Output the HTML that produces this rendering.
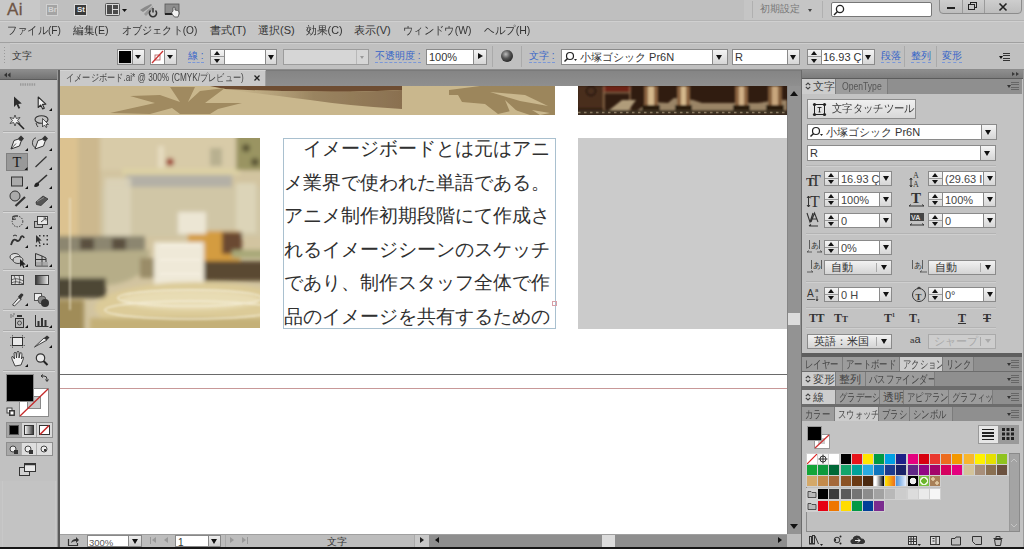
<!DOCTYPE html>
<html><head><meta charset="utf-8">
<style>
*{box-sizing:border-box;margin:0;padding:0}
html,body{width:1024px;height:549px;overflow:hidden;background:#000}
body{position:relative;font-family:"Liberation Sans",sans-serif;color:#222;font-feature-settings:"palt" 1}
.a{position:absolute}
.t{position:absolute;white-space:nowrap;line-height:1}
.inp{position:absolute;background:#fff;border:1px solid #7a7a7a}
.btn{position:absolute;background:linear-gradient(#f4f4f4,#d6d6d6);border:1px solid #8a8a8a}
.dd{position:absolute;background:linear-gradient(#f2f2f2,#d0d0d0);border:1px solid #7a7a7a}
.tri{position:absolute;width:0;height:0;border-left:4px solid transparent;border-right:4px solid transparent;border-top:5px solid #111}
.lnk{color:#3564c8;padding-bottom:1px;border-bottom:1px dashed #7b98d8}
</style></head><body>


<!-- app bar -->
<div class="a" style="left:0;top:0;width:1024px;height:21px;background:#bfbfbf;border-bottom:1px solid #b4b4b4"></div>
<div class="a" style="left:0;top:0;width:40px;height:20px;background:#c8c8c8"></div><div class="a" style="left:744px;top:0;width:280px;height:20px;background:#c5c5c5"></div>
<div class="t" style="left:7px;top:1px;font-size:17px;color:#6e5546;-webkit-text-stroke:0.3px #6e5546;letter-spacing:0.3px">Ai</div>
<div class="a" style="left:46px;top:4px;width:12px;height:12px;background:#a4a4a4;border:1px solid #d0d0d0"></div>
<div class="t" style="left:48px;top:6px;font-size:8px;color:#d4d4d4;font-weight:bold">Br</div>
<div class="a" style="left:74px;top:4px;width:13px;height:12px;background:#3a3a3a;border:1px solid #dadada"></div>
<div class="t" style="left:77px;top:6px;font-size:8px;color:#e8e8e8;font-weight:bold">St</div>
<svg class="a" style="left:104px;top:2px" width="26" height="15" viewBox="0 0 26 15">
<rect x="1.5" y="1.5" width="14" height="12" rx="1" fill="#d8d8d8" stroke="#555" stroke-width="1"/>
<rect x="3" y="3" width="5" height="9" fill="#4a4a4a"/>
<rect x="9" y="3" width="5" height="4" fill="#4a4a4a"/>
<rect x="9" y="8" width="5" height="4" fill="#4a4a4a"/>
<path d="M18 7 H23 L20.5 10Z" fill="#111"/>
</svg>
<svg class="a" style="left:139px;top:2px" width="20" height="16" viewBox="0 0 20 16">
<path d="M1 8 Q5 5 12 2 L13 3 Q8 8 4 10Z" fill="#8a8a8a"/>
<path d="M5 12 Q9 7 14 4 L13 8 Q10 11 7 14Z" fill="#999"/>
<path d="M11.5 8.5 A3.6 3.6 0 1 0 16.5 8.5" fill="none" stroke="#333" stroke-width="1.5"/>
<path d="M14 6 V10.5" stroke="#333" stroke-width="1.5"/>
</svg>
<svg class="a" style="left:164px;top:3px" width="18" height="15" viewBox="0 0 18 15">
<rect x="1" y="1" width="14" height="10" fill="#8e8e8e" stroke="#555" stroke-width="0.8"/>
<rect x="1" y="10" width="14" height="2" fill="#222"/>
<path d="M9 8 L9 4.5 Q10 3.5 11 4.5 L11 7 L13.5 7.5 Q15.5 8 15 11 L14 14 L10.5 14 L8 11 Q7 9.5 9 8Z" fill="#f2f2f2" stroke="#444" stroke-width="0.8"/>
</svg>
<div class="a" style="left:752px;top:1px;width:1px;height:17px;background:#b0b0b0"></div>
<div class="t" style="left:760px;top:4px;font-size:10px;color:#777">初期設定</div>
<div class="tri" style="left:808px;top:9px;border-left-width:2px;border-right-width:2px;border-top-width:3px;border-top-color:#444"></div>
<div class="a" style="left:822px;top:1px;width:1px;height:17px;background:#b0b0b0"></div>
<div class="a" style="left:831px;top:2px;width:101px;height:15px;background:#fff;border:1px solid #777;border-radius:2px"></div>
<svg class="a" style="left:833px;top:4px" width="12" height="12" viewBox="0 0 12 12"><circle cx="7" cy="5" r="3.6" fill="none" stroke="#222" stroke-width="1.3"/><path d="M4.5 7.5 L1 11" stroke="#222" stroke-width="1.5"/></svg>
<div class="a" style="left:939px;top:-2px;width:83px;height:16px;background:linear-gradient(#cfcfcf,#bdbdbd);border:1px solid #8c8c8c;border-radius:0 0 4px 4px"></div>
<div class="a" style="left:962px;top:0;width:1px;height:13px;background:#9a9a9a"></div>
<div class="a" style="left:984px;top:0;width:1px;height:13px;background:#9a9a9a"></div>
<div class="a" style="left:947px;top:7px;width:8px;height:2px;background:#222"></div>
<div class="a" style="left:970px;top:2px;width:7px;height:6px;border:1.5px solid #222"></div>
<div class="a" style="left:968px;top:4px;width:7px;height:6px;border:1.5px solid #222;background:#c6c6c6"></div>
<svg class="a" style="left:998px;top:2px" width="10" height="10"><path d="M1.5 1.5 L8.5 8.5 M8.5 1.5 L1.5 8.5" stroke="#222" stroke-width="1.6"/></svg>

<!-- menu bar -->
<div class="a" style="left:0;top:21px;width:1024px;height:21px;background:#c5c5c5;border-top:1px solid #d0d0d0"></div>
<div class="t" style="left:7px;top:25px;font-size:11px;color:#333;transform:scaleX(0.93);transform-origin:0 0">ファイル(F)</div>
<div class="t" style="left:73px;top:25px;font-size:11px;color:#333;transform:scaleX(0.97);transform-origin:0 0">編集(E)</div>
<div class="t" style="left:122px;top:25px;font-size:11px;color:#333;transform:scaleX(0.92);transform-origin:0 0">オブジェクト(O)</div>
<div class="t" style="left:210px;top:25px;font-size:11px;color:#333;transform:scaleX(1);transform-origin:0 0">書式(T)</div>
<div class="t" style="left:258px;top:25px;font-size:11px;color:#333;transform:scaleX(1);transform-origin:0 0">選択(S)</div>
<div class="t" style="left:306px;top:25px;font-size:11px;color:#333;transform:scaleX(0.98);transform-origin:0 0">効果(C)</div>
<div class="t" style="left:354px;top:25px;font-size:11px;color:#333;transform:scaleX(1);transform-origin:0 0">表示(V)</div>
<div class="t" style="left:403px;top:25px;font-size:11px;color:#333;transform:scaleX(0.94);transform-origin:0 0">ウィンドウ(W)</div>
<div class="t" style="left:484px;top:25px;font-size:11px;color:#333;transform:scaleX(0.96);transform-origin:0 0">ヘルプ(H)</div>

<!-- control bar -->
<div class="a" style="left:0;top:42px;width:1024px;height:28px;background:#c0c0c0;border-top:1px solid #a0a0a0;border-bottom:1px solid #8c8c8c;box-shadow:inset 0 1px 0 #cecece"></div>
<div class="a" style="left:3px;top:47px;width:1px;height:17px;border-left:1px dotted #999"></div>
<div class="a" style="left:0;top:43px;width:10px;height:26px;background:#c4c4c4"></div>
<div class="a" style="left:4px;top:47px;width:1px;height:18px;background:repeating-linear-gradient(#9a9a9a 0 1px,transparent 1px 3px)"></div>
<div class="t" style="left:12px;top:51px;font-size:10px;color:#333">文字</div>
<!-- fill -->
<div class="btn" style="left:117px;top:49px;width:28px;height:16px"></div>
<div class="a" style="left:119px;top:51px;width:12px;height:12px;background:#000"></div>
<div class="a" style="left:132px;top:49px;width:1px;height:16px;background:#8a8a8a"></div>
<div class="tri" style="left:135px;top:55px;border-left-width:3px;border-right-width:3px;border-top-width:4px"></div>
<!-- stroke -->
<div class="btn" style="left:150px;top:49px;width:27px;height:16px"></div>
<div class="a" style="left:151px;top:50px;width:13px;height:14px;background:#fff"></div>
<svg class="a" style="left:151px;top:50px" width="13" height="14"><rect x="4" y="5" width="5" height="5" fill="none" stroke="#a55" stroke-width="0.8"/><path d="M1 13 L12 1" stroke="#c33" stroke-width="1.3"/></svg>
<div class="a" style="left:164px;top:49px;width:1px;height:16px;background:#8a8a8a"></div>
<div class="tri" style="left:167px;top:55px;border-left-width:3px;border-right-width:3px;border-top-width:4px"></div>
<div class="t lnk" style="left:188px;top:51px;font-size:10px">線 :</div>
<!-- stroke weight -->
<div class="btn" style="left:210px;top:49px;width:67px;height:16px"></div>
<div class="a" style="left:211px;top:56px;width:13px;height:1px;background:#999"></div>
<div class="tri" style="left:214px;top:51px;border-top:0;border-bottom:4px solid #111;border-left-width:3px;border-right-width:3px"></div>
<div class="tri" style="left:214px;top:59px;border-left-width:3px;border-right-width:3px;border-top-width:4px"></div>
<div class="inp" style="left:224px;top:49px;width:42px;height:16px;border-color:#8a8a8a"></div>
<div class="tri" style="left:268px;top:55px;border-left-width:3.5px;border-right-width:3.5px;border-top-width:5px"></div>
<div class="a" style="left:283px;top:49px;width:86px;height:16px;background:#d6d6d6;border:1px solid #9c9c9c"></div>
<div class="a" style="left:356px;top:50px;width:1px;height:14px;background:#b8b8b8"></div>
<div class="tri" style="left:360px;top:56px;border-left-width:2.5px;border-right-width:2.5px;border-top-width:3px;border-top-color:#999"></div>
<div class="t lnk" style="left:375px;top:51px;font-size:10px">不透明度 :</div>
<div class="btn" style="left:426px;top:49px;width:61px;height:16px"></div>
<div class="inp" style="left:426px;top:49px;width:48px;height:16px;border-color:#8a8a8a"></div>
<div class="t" style="left:429px;top:52px;font-size:11px;color:#333">100%</div>
<div class="a" style="left:478px;top:53px;width:0;height:0;border-top:3.5px solid transparent;border-bottom:3.5px solid transparent;border-left:5px solid #111"></div>
<div class="a" style="left:492px;top:46px;width:1px;height:21px;background:#aaa"></div>
<div class="a" style="left:501px;top:50px;width:12px;height:12px;border-radius:50%;background:radial-gradient(circle at 40% 35%,#bbb 0,#555 40%,#222 80%)"></div>
<div class="a" style="left:521px;top:46px;width:1px;height:21px;background:#aaa"></div>
<div class="t lnk" style="left:529px;top:51px;font-size:10px">文字 :</div>
<div class="btn" style="left:561px;top:49px;width:167px;height:16px"></div>
<div class="inp" style="left:561px;top:49px;width:152px;height:16px;border-color:#8a8a8a"></div>
<svg class="a" style="left:563px;top:51px" width="16" height="12"><circle cx="7" cy="5" r="3.5" fill="none" stroke="#222" stroke-width="1.2"/><path d="M4.6 7.4 L1.5 10.5" stroke="#222" stroke-width="1.4"/><path d="M11 8 L14 8 L12.5 10Z" fill="#222"/></svg>
<div class="t" style="left:580px;top:52px;font-size:11px;color:#333">小塚ゴシック Pr6N</div>
<div class="tri" style="left:716px;top:55px;border-left-width:3.5px;border-right-width:3.5px;border-top-width:5px"></div>
<div class="btn" style="left:732px;top:49px;width:68px;height:16px"></div>
<div class="inp" style="left:732px;top:49px;width:56px;height:16px;border-color:#8a8a8a"></div>
<div class="t" style="left:735px;top:52px;font-size:11px;color:#333">R</div>
<div class="tri" style="left:790px;top:55px;border-left-width:3.5px;border-right-width:3.5px;border-top-width:5px"></div>
<div class="btn" style="left:807px;top:49px;width:68px;height:16px"></div>
<div class="a" style="left:808px;top:56px;width:13px;height:1px;background:#999"></div>
<div class="tri" style="left:811px;top:51px;border-top:0;border-bottom:4px solid #111;border-left-width:3px;border-right-width:3px"></div>
<div class="tri" style="left:811px;top:59px;border-left-width:3px;border-right-width:3px;border-top-width:4px"></div>
<div class="inp" style="left:821px;top:49px;width:42px;height:16px;border-color:#8a8a8a"></div>
<div class="t" style="left:823px;top:52px;font-size:11px;color:#333">16.93 Ç</div>
<div class="tri" style="left:865px;top:55px;border-left-width:3.5px;border-right-width:3.5px;border-top-width:5px"></div>
<div class="t lnk" style="left:881px;top:51px;font-size:10px">段落</div>
<div class="a" style="left:904px;top:46px;width:1px;height:21px;background:#aaa"></div>
<div class="t lnk" style="left:911px;top:51px;font-size:10px">整列</div>
<div class="a" style="left:936px;top:46px;width:1px;height:21px;background:#aaa"></div>
<div class="t lnk" style="left:942px;top:51px;font-size:10px">変形</div>
<div class="tri" style="left:999px;top:56px;border-left-width:2px;border-right-width:2px;border-top-width:3px"></div>
<div class="a" style="left:1003px;top:53px;width:7px;height:8px;background:repeating-linear-gradient(#333 0 1px,transparent 1px 2.4px)"></div>


<!-- left toolbox -->
<div class="a" style="left:0;top:70px;width:57px;height:477px;background:#c3c3c3"></div>
<div class="a" style="left:0;top:70px;width:57px;height:10px;background:linear-gradient(#8c8c8c,#727272);border-bottom:1px solid #5c5c5c"></div>
<div class="a" style="left:57px;top:70px;width:3px;height:477px;background:#5a5a5a;border-left:1px solid #9a9a9a"></div>
<div class="a" style="left:0;top:80px;width:57px;height:401px;background:#c1c1c1"></div><div class="a" style="left:2px;top:481px;width:54px;height:66px;border-left:1px solid #c8c8c8;border-right:1px solid #c8c8c8;background:#c3c3c3"></div>
<svg class="a" style="left:0;top:0" width="60" height="549" viewBox="0 0 60 549">
<g fill="#333"><path d="M4 75 L7 72.5 L7 77.5Z"/><path d="M7.5 75 L10.5 72.5 L10.5 77.5Z"/></g>
<path d="M20 84.5 H36" stroke="#9a9a9a" stroke-width="2.5" stroke-dasharray="1.4 0.9"/>
<g stroke="#d8d8d8" stroke-width="1"><path d="M3 132.5H55M3 212.5H55M3 270.5H55M3 310.5H55M3 331.5H55M3 371.5H55"/></g>
<g stroke="#acacac" stroke-width="1"><path d="M3 131.5H55M3 211.5H55M3 269.5H55M3 309.5H55M3 330.5H55M3 370.5H55"/></g>
<!-- row1 -->
<path d="M14 96.5 L14 107 L16.5 104.5 L18.5 108.7 L20.2 107.9 L18.3 103.9 L21.8 103.6 Z" fill="#2c2c2c"/>
<path d="M38.2 97 L38.2 107.5 L40.7 105 L42.7 109 L44.3 108.3 L42.5 104.4 L45.9 104.1 Z" fill="#f0f0f0" stroke="#2c2c2c" stroke-width="1.1" stroke-linejoin="round"/>
<!-- markers -->
<g fill="#111"><path d="M49 111 L52 108 L52 111Z"/><path d="M25 151 L28 148 L28 151Z"/><path d="M49 151 L52 148 L52 151Z"/><path d="M25 170 L28 167 L28 170Z"/><path d="M49 170 L52 167 L52 170Z"/><path d="M25 189 L28 186 L28 189Z"/><path d="M49 189 L52 186 L52 189Z"/><path d="M25 208 L28 205 L28 208Z"/><path d="M49 208 L52 205 L52 208Z"/><path d="M25 229 L28 226 L28 229Z"/><path d="M49 229 L52 226 L52 229Z"/><path d="M25 248 L28 245 L28 248Z"/><path d="M25 267 L28 264 L28 267Z"/><path d="M49 267 L52 264 L52 267Z"/><path d="M25 306 L28 303 L28 306Z"/><path d="M25 328 L28 325 L28 328Z"/><path d="M49 328 L52 325 L52 328Z"/><path d="M49 348 L52 345 L52 348Z"/><path d="M25 367 L28 364 L28 367Z"/></g>
<!-- row2 wand / lasso -->
<path d="M17 122 L24 129" stroke="#222" stroke-width="1.6"/>
<path d="M15 115 L16.3 118.5 L20 117.5 L17.5 120.5 L20 123.5 L16.3 122.5 L15 126 L13.7 122.5 L10 123.5 L12.5 120.5 L10 117.5 L13.7 118.5Z" fill="#eee" stroke="#333" stroke-width="0.8"/>
<ellipse cx="41.5" cy="119.5" rx="6.5" ry="3.8" fill="none" stroke="#333" stroke-width="1.1"/>
<path d="M36 123 Q37 126 38 127" fill="none" stroke="#333" stroke-width="1"/>
<path d="M42.5 118.5 L42.5 127 L44.5 125 L46 127.5 L47 127 L46 124.5 L48.5 124.5Z" fill="#eee" stroke="#333" stroke-width="0.8"/>
<!-- pen -->
<path d="M11 149 L14 140.5 L18.5 139 L21 141.5 L19.5 146 Z" fill="#f2f2f2" stroke="#333" stroke-width="1"/>
<path d="M18 138.5 L21 135.5 L24 138.5 L21.5 141.5Z" fill="#333"/>
<path d="M11 149 L16 143.5" stroke="#333" stroke-width="0.8"/>
<path d="M35 149 L38 140.5 L42.5 139 L45 141.5 L43.5 146 Z" fill="#f2f2f2" stroke="#333" stroke-width="1"/>
<path d="M42 138.5 L45 135.5 L48 138.5 L45.5 141.5Z" fill="#333"/>
<path d="M36 148 Q31 146 33 140 Q35 137 36 138" fill="none" stroke="#333" stroke-width="0.9"/>
<!-- type highlighted -->
<rect x="6.5" y="153.5" width="21" height="17" fill="#999" stroke="#808080"/>
<text x="12.5" y="166.5" font-family="Liberation Serif" font-size="14.5" fill="#1a1a1a">T</text><path d="M24.5 170 L27.5 167 L27.5 170Z" fill="#111"/>
<path d="M35.5 167 L46.5 156.5" stroke="#333" stroke-width="1.2"/>
<!-- rect / brush -->
<rect x="11.5" y="177" width="11" height="9" fill="#aaa" stroke="#333" stroke-width="1"/>
<path d="M38 183 L47 175" stroke="#333" stroke-width="1.6"/>
<path d="M34 186.5 Q35 182 38 182.5 Q40 184 38.5 186 Q36 187.5 34 186.5Z" fill="#222"/>
<!-- shaper / eraser -->
<circle cx="15" cy="196" r="5" fill="#aaa" stroke="#333" stroke-width="1"/>
<path d="M15.5 206 L25 197" stroke="#333" stroke-width="2.2"/>
<path d="M36 202 L43 196 L48 199 L41 205.5 L36.5 204.5Z" fill="#555" stroke="#333" stroke-width="0.8"/>
<path d="M37 201.5 L44 197.5" stroke="#999" stroke-width="0.8"/>
<!-- rotate / scale -->
<circle cx="17.5" cy="221.5" r="5.3" fill="none" stroke="#333" stroke-width="1" stroke-dasharray="1.3 1.3"/>
<path d="M13 216 L12.5 219.5 L16 219" fill="none" stroke="#333" stroke-width="1"/>
<path d="M13 216.5 Q15 215.5 18 216" fill="none" stroke="#333" stroke-width="1.2"/>
<rect x="34.5" y="221.5" width="8" height="6" fill="#bbb" stroke="#333" stroke-width="0.9"/>
<rect x="37.5" y="216.5" width="10" height="8" fill="#e8e8e8" stroke="#333" stroke-width="0.9"/>
<path d="M41 222 L46 218 M43.5 218 H46 V220.5" fill="none" stroke="#333" stroke-width="0.9"/>
<!-- warp / free transform -->
<path d="M11 245 Q13 238 16 240 Q19 243 21 237 Q23 235 24 238" fill="none" stroke="#333" stroke-width="1.8"/>
<path d="M13 236 Q15 234 17 236" fill="none" stroke="#333" stroke-width="1"/>
<path d="M36 235 L36 243 L38 241 L39.5 244 L40.5 243.5 L39.3 240.7 L41.7 240.5Z" fill="#333"/>
<g fill="#333"><rect x="39" y="235" width="1.5" height="1.5"/><rect x="43" y="235" width="1.5" height="1.5"/><rect x="46.5" y="235" width="1.5" height="1.5"/><rect x="46.5" y="239" width="1.5" height="1.5"/><rect x="46.5" y="243.5" width="1.5" height="1.5"/><rect x="43" y="243.5" width="1.5" height="1.5"/><rect x="39" y="245" width="1.5" height="1.5"/><rect x="35.5" y="245" width="1.5" height="1.5"/></g>
<!-- shape builder / perspective -->
<ellipse cx="15" cy="257" rx="5" ry="3.5" fill="#ddd" stroke="#333" stroke-width="0.9"/>
<ellipse cx="18" cy="260" rx="5" ry="3.5" fill="#ccc" stroke="#333" stroke-width="0.9"/>
<path d="M20 259 L20 267 L22 265 L23.5 268 L24.5 267.5 L23.3 264.7 L25.7 264.5Z" fill="#222"/>
<path d="M35.5 253.5 V266 H48 M35.5 253.5 L42 256 V266 M42 256 L46 258 V262 M35.5 259.5 H46" fill="none" stroke="#333" stroke-width="1"/>
<rect x="36" y="262" width="12" height="4" fill="#999" opacity="0.6"/>
<!-- mesh / gradient -->
<rect x="11.5" y="275.5" width="12" height="9" fill="#ddd" stroke="#333" stroke-width="0.9"/>
<path d="M11.5 280 Q16 277 23.5 281 M14 275.5 Q17 280 15 284.5 M19 275.5 Q21 280 19 284.5 M11.5 283 Q16 280 23.5 284" fill="none" stroke="#333" stroke-width="0.7"/>
<defs><linearGradient id="g1" x1="0" x2="1"><stop offset="0" stop-color="#333"/><stop offset="1" stop-color="#eee"/></linearGradient>
<linearGradient id="g2" x1="0" x2="1"><stop offset="0" stop-color="#fff"/><stop offset="1" stop-color="#333"/></linearGradient></defs>
<rect x="35.5" y="275.5" width="13" height="9" fill="url(#g1)" stroke="#333" stroke-width="0.9"/>
<!-- eyedropper / blend -->
<path d="M12.5 305 L19 297.5 L21 299.5 L14.5 306Z" fill="#eee" stroke="#333" stroke-width="0.9"/>
<path d="M18 296.5 L21 293.5 Q23 293 23.5 295 L22 297 L20.5 300Z" fill="#333"/>
<rect x="34.5" y="293.5" width="7" height="7" fill="#eee" stroke="#444" stroke-width="0.9"/>
<circle cx="42" cy="300" r="4" fill="#888" stroke="#444" stroke-width="0.8"/>
<circle cx="45" cy="303" r="4" fill="#333"/>
<!-- symbol sprayer / graph -->
<rect x="15.5" y="318.5" width="8" height="9" fill="#bbb" stroke="#333" stroke-width="1"/>
<circle cx="19.5" cy="323" r="2" fill="none" stroke="#333" stroke-width="0.8"/>
<rect x="17" y="315" width="5" height="2" fill="#333"/>
<g fill="#555"><circle cx="11" cy="315" r="0.7"/><circle cx="13" cy="316" r="0.7"/><circle cx="11" cy="317" r="0.7"/><circle cx="14" cy="314" r="0.7"/></g>
<path d="M35.5 315 V326.5 H48.5" fill="none" stroke="#333" stroke-width="1"/>
<g fill="#333"><rect x="37.5" y="321" width="2" height="5"/><rect x="41" y="318" width="2" height="8"/><rect x="44.5" y="320" width="2" height="6"/></g>
<!-- artboard / slice -->
<rect x="12.5" y="337.5" width="10" height="8" fill="#eaeaea" stroke="#333" stroke-width="1"/>
<path d="M10 337.5 H11.5 M23.5 337.5 H25 M10 345.5 H11.5 M23.5 345.5 H25 M12.5 335 V336.5 M22.5 335 V336.5 M12.5 346.5 V348 M22.5 346.5 V348" stroke="#555" stroke-width="0.8"/>
<path d="M34.5 347 L44 338 L47 340 Z" fill="#eee" stroke="#333" stroke-width="0.9"/>
<path d="M44 338 L47 335.5 L49.5 337.5 L47 340Z" fill="#333"/>
<!-- hand / zoom -->
<path d="M12 359 Q11 356 13 356.5 L14.5 359 L14 353 Q15 351.5 16 353 L16.5 358 L17 352 Q18 350.5 19 352 L19 358 L20 353 Q21 352 22 353.5 L21.5 359 L22.5 357 Q24 356.5 23.5 358.5 L21 365 L15 366Z" fill="#f0f0f0" stroke="#333" stroke-width="0.9"/>
<circle cx="40.5" cy="358" r="4.2" fill="#e8e8e8" stroke="#333" stroke-width="1.2"/>
<path d="M43.5 361 L47.5 365" stroke="#222" stroke-width="2"/>
<!-- fill/stroke -->
<rect x="19.5" y="388.5" width="29" height="28" fill="#fff" stroke="#8a8a8a"/>
<rect x="27.5" y="396.5" width="13" height="12" fill="#c8c8c8" stroke="#888"/>
<path d="M20 416 L48 389" stroke="#c42a2a" stroke-width="1.3"/>
<rect x="6.5" y="374.5" width="27" height="27" fill="#000" stroke="#8a8a8a"/>
<path d="M41 376 L44 376 Q47 376 47 379 L47 381 M45.5 379.5 L47 381.5 L48.5 379.5 M43 374.5 L41 376 L43 377.5" fill="none" stroke="#333" stroke-width="1"/>
<rect x="7" y="408" width="5" height="5" fill="#eee" stroke="#333" stroke-width="0.9"/>
<rect x="9.5" y="410.5" width="5" height="5" fill="#333" stroke="#333" stroke-width="0.9"/>
<rect x="10.5" y="411.5" width="3" height="3" fill="#fff"/>
<!-- color mode buttons -->
<rect x="6.5" y="422.5" width="46" height="15" fill="#d8d8d8" stroke="#8e8e8e"/>
<rect x="7" y="423" width="14" height="14" fill="#a5a5a5"/>
<rect x="9.5" y="425.5" width="9" height="9" fill="#000" stroke="#555"/>
<rect x="24.5" y="425.5" width="9" height="9" fill="url(#g2)" stroke="#333"/>
<rect x="39.5" y="425.5" width="10" height="9" fill="#fff" stroke="#333"/>
<path d="M40 434.5 L49 425.5" stroke="#c42a2a" stroke-width="1.6"/>
<path d="M21.5 423 V437 M36.5 423 V437" stroke="#9e9e9e"/>
<!-- draw modes -->
<rect x="6.5" y="442.5" width="46" height="13" fill="#dedede" stroke="#8e8e8e"/>
<rect x="7" y="443" width="14" height="12" fill="#a8a8a8"/>
<circle cx="13" cy="449" r="3" fill="#eee" stroke="#333" stroke-width="0.9"/>
<rect x="14" y="450" width="4" height="4" fill="#333"/>
<circle cx="28" cy="449" r="3" fill="#eee" stroke="#333" stroke-width="0.9"/>
<rect x="29" y="450" width="4" height="4" fill="#333"/>
<circle cx="44" cy="449" r="3" fill="#eee" stroke="#333" stroke-width="0.9"/>
<path d="M44 449 h2 v2 h-2z" fill="#333"/>
<path d="M21.5 443 V455 M36.5 443 V455" stroke="#b0b0b0"/>
<!-- screen mode -->
<rect x="19.5" y="467.5" width="10" height="8" fill="#d0d0d0" stroke="#333"/>
<rect x="24.5" y="463.5" width="11" height="8" fill="#e8e8e8" stroke="#333"/>
<path d="M24.5 464.5 H35.5" stroke="#333" stroke-width="1.5"/>
</svg>


<!-- tab bar -->
<div class="a" style="left:60px;top:70px;width:741px;height:16px;background:linear-gradient(#858585,#8f8f8f);border-top:1px solid #7a7a7a"></div>
<div class="a" style="left:60px;top:70px;width:206px;height:16px;background:#c9c9c9;border-top:1px solid #d4d4d4;border-right:1px solid #a0a0a0"></div>
<div class="t" style="left:66px;top:73px;font-size:10px;color:#444;transform:scaleX(0.82);transform-origin:0 0">イメージボード.ai* @ 300% (CMYK/プレビュー)</div>
<svg class="a" style="left:254px;top:75px" width="6" height="6"><path d="M0.5 0.5 L5.5 5.5 M5.5 0.5 L0.5 5.5" stroke="#222" stroke-width="1.3"/></svg>

<!-- canvas -->
<div class="a" style="left:60px;top:86px;width:727px;height:448px;background:#fff"></div>
<!-- top-left strip -->
<svg class="a" style="left:60px;top:86px" width="495" height="29" viewBox="0 0 495 29">
<defs><filter id="bl1"><feGaussianBlur stdDeviation="0.7"/></filter>
<linearGradient id="sh1" x1="0" x2="1"><stop offset="0" stop-color="#b09c74" stop-opacity="0"/><stop offset="0.5" stop-color="#9a8460"/><stop offset="1" stop-color="#8a7050"/></linearGradient></defs>
<rect width="495" height="29" fill="#c9b78d"/>
<g filter="url(#bl1)">
<path d="M150 0 L342 0 L342 4 Q270 8 165 3Z" fill="#6e4e30"/>
<path d="M165 3 Q270 8 342 4 L342 23 Q290 20 250 14 Q200 8 165 3Z" fill="url(#sh1)"/>
<path d="M50 27 L95 17 L70 10 L100 9 L120 16 L110 1 L135 1 L128 16 L140 5 L165 2 L145 17 L182 17 L158 23 L150 28 L120 28 L112 22 L90 28Z" fill="#a08a60"/>
<path d="M389 4 L420 0 L495 0 L495 29 L470 29 L455 24 L438 28 L425 18 L402 16 L398 9 L389 9Z" fill="#9c865c"/>
<path d="M430 6 L465 9 L488 20 L460 15Z M445 14 L458 26 L450 26Z M472 24 L490 27 L480 29Z" fill="#c9b78d"/>
</g>
</svg>
<!-- top-right strip -->
<svg class="a" style="left:578px;top:86px" width="209" height="29" viewBox="0 0 209 29">
<defs><filter id="bl2"><feGaussianBlur stdDeviation="0.8"/></filter></defs>
<rect width="209" height="29" fill="#301c10"/>
<g filter="url(#bl2)">
<rect x="0" y="0" width="26" height="22" fill="#4a2e1c"/>
<circle cx="13" cy="5" r="4.5" fill="none" stroke="#1e120a" stroke-width="1.5"/>
<rect x="25" y="0" width="28" height="6" fill="#6e2018"/>
<path d="M26 0 V24 M52 0 V24 M26 7 H52" stroke="#a07a58" stroke-width="1.2"/>
<path d="M30 25 L44 14 L58 14 L50 25Z" fill="#b09c7a"/>
<path d="M60 24 L72 16 L90 17 L96 12 L115 14 L124 17 L180 17 L200 14 L209 14 L209 25 L60 25Z" fill="#9a8466"/>
<rect x="66" y="0" width="14" height="22" fill="#8a6440"/><rect x="70" y="0" width="6" height="19" fill="#d4b88c"/><rect x="64" y="19" width="18" height="5" fill="#2a1a0e"/>
<rect x="99" y="0" width="13" height="22" fill="#8a6440"/><rect x="103" y="0" width="5" height="19" fill="#d4b88c"/><rect x="97" y="19" width="17" height="5" fill="#2a1a0e"/>
<rect x="157" y="0" width="13" height="22" fill="#8a6440"/><rect x="161" y="0" width="5" height="19" fill="#d0b086"/><rect x="155" y="19" width="17" height="5" fill="#2a1a0e"/>
<rect x="190" y="0" width="14" height="22" fill="#805c3a"/><rect x="194" y="0" width="6" height="19" fill="#c8a67c"/><rect x="188" y="19" width="18" height="5" fill="#2a1a0e"/>
<rect x="0" y="24" width="209" height="5" fill="#3e3024"/>
</g>
<path d="M0 26.5 H209" stroke="#8a7a62" stroke-width="1.5" stroke-dasharray="2.5 3.5"/>
</svg>
<!-- dinner photo -->
<svg class="a" style="left:60px;top:138px" width="200" height="190" viewBox="0 0 200 190">
<defs><filter id="bl3" x="-20%" y="-20%" width="140%" height="140%"><feGaussianBlur stdDeviation="2"/></filter>
<filter id="bl4"><feGaussianBlur stdDeviation="0.8"/></filter>
<clipPath id="cp1"><rect width="200" height="190"/></clipPath></defs>
<g clip-path="url(#cp1)">
<rect width="200" height="190" fill="#d2c4a0"/>
<g filter="url(#bl3)">
<rect x="-10" y="-10" width="220" height="42" fill="#d8cba8"/>
<rect x="-10" y="-10" width="28" height="110" fill="#dcc290"/>
<rect x="18" y="-10" width="22" height="110" fill="#ccb88e"/>
<rect x="62" y="30" width="118" height="7" fill="#dcd0a4"/>
<rect x="66" y="37" width="106" height="20" fill="#b4b0a6"/>
<rect x="42" y="49" width="170" height="50" fill="#d0c6a6"/>
<rect x="45" y="40" width="26" height="60" fill="#dcd4bc" opacity="0.8"/>
<circle cx="110" cy="24" r="4" fill="#a04a38"/>
<rect x="98" y="8" width="6" height="22" fill="#e6dcc0"/>
<rect x="150" y="10" width="12" height="18" fill="#b8b090"/>
<rect x="176" y="-10" width="34" height="42" fill="#9a9462"/><circle cx="186" cy="10" r="4" fill="#5a5434"/><circle cx="195" cy="24" r="4" fill="#5a5434"/>
<rect x="176" y="45" width="20" height="50" fill="#dcd4b8"/>
<rect x="-5" y="98" width="90" height="18" fill="#8c8670"/>
<rect x="20" y="100" width="14" height="12" fill="#5a5040"/><rect x="52" y="100" width="14" height="12" fill="#5a5040"/>
<path d="M-10 114 L90 112 L86 130 Q72 146 40 148 L-10 146Z" fill="#b6ad88"/>
<rect x="-10" y="140" width="56" height="20" fill="#4e4636"/>
<rect x="80" y="120" width="30" height="20" fill="#9a8c68"/>
<rect x="128" y="93" width="52" height="30" fill="#d49c40"/>
<rect x="162" y="94" width="20" height="22" fill="#6a4a30"/>
<rect x="136" y="123" width="74" height="20" fill="#5a4a32"/>
<rect x="172" y="112" width="38" height="8" fill="#a8a878"/>
<rect x="94" y="104" width="50" height="58" fill="#efe9d8"/>
<rect x="118" y="74" width="28" height="22" fill="#ece6d4"/>
<ellipse cx="135" cy="170" rx="100" ry="26" fill="#dccb98"/><ellipse cx="130" cy="162" rx="70" ry="10" fill="#e8dcb4"/>
<rect x="-10" y="162" width="34" height="40" fill="#a08c58"/><rect x="30" y="180" width="180" height="20" fill="#c4b078"/>
</g>
<g filter="url(#bl4)" fill="none" stroke="#f6f0dc" stroke-width="1.5" opacity="0.8">
<ellipse cx="130" cy="160" rx="72" ry="8"/>
<ellipse cx="130" cy="172" rx="85" ry="9"/>
<path d="M10 60 V172" stroke="#ebe3c8"/>
<path d="M100 108 H140 M100 122 H140 M100 136 H140" stroke="#faf6ea" stroke-width="1"/>
</g>
</g>
</svg>

<!-- text box -->
<div class="a" style="left:283px;top:138px;width:273px;height:191px;border:1px solid #a9c0cf"></div>
<div class="a" style="left:552px;top:301px;width:5px;height:5px;border:1px solid #d8a0a8"></div>
<div class="a" style="left:284px;top:132px;width:272px;font-size:19.4px;line-height:33.6px;color:#303030;white-space:nowrap">
<div style="height:33.6px">　イメージボードとは元はアニ</div>
<div style="height:33.6px">メ業界で使われた単語である。</div>
<div style="height:33.6px">アニメ制作初期段階にて作成さ</div>
<div style="height:33.6px">れるイメージシーンのスケッチ</div>
<div style="height:33.6px">であり、制作スタッフ全体で作</div>
<div style="height:33.6px">品のイメージを共有するための</div>
</div>
<!-- gray rect -->
<div class="a" style="left:578px;top:138px;width:209px;height:191px;background:#cbcbcb"></div>
<!-- guide lines -->
<div class="a" style="left:60px;top:374px;width:727px;height:1px;background:#6a6a6a"></div>
<div class="a" style="left:60px;top:388px;width:727px;height:1px;background:#c89898"></div>

<!-- vertical scrollbar -->
<div class="a" style="left:787px;top:86px;width:14px;height:448px;background:#939393;border-left:1px solid #858585"></div>
<div class="tri" style="left:790px;top:91px;border-top:0;border-bottom:5px solid #111;border-left-width:4px;border-right-width:4px"></div>
<div class="a" style="left:788px;top:313px;width:12px;height:12px;background:#dcdcdc"></div>
<div class="tri" style="left:790px;top:524px;border-left-width:4px;border-right-width:4px;border-top-width:5px"></div>
<!-- status bar -->
<div class="a" style="left:60px;top:534px;width:741px;height:13px;background:#bdbdbd;border-top:1px solid #a0a0a0"></div>
<svg class="a" style="left:67px;top:536px" width="13" height="10"><path d="M1.5 3 V9.5 H10.5 V7" fill="none" stroke="#333" stroke-width="1.2"/><path d="M4 7 Q5 3 9 3 V1 L12 4 L9 7 V5 Q6 5 4 7Z" fill="#333"/></svg>
<div class="a" style="left:87px;top:535px;width:55px;height:12px;background:linear-gradient(#eee,#ccc);border:1px solid #888"></div>
<div class="a" style="left:87px;top:535px;width:42px;height:12px;background:#fff;border:1px solid #888"></div>
<div class="t" style="left:89px;top:538px;font-size:9.5px;color:#5a5a5a">300%</div>
<div class="tri" style="left:132px;top:539px;border-left-width:3.5px;border-right-width:3.5px;border-top-width:5px"></div>
<div class="a" style="left:150px;top:537px;width:1px;height:7px;background:#999"></div>
<div class="a" style="left:152px;top:537px;width:0;height:0;border-top:3.5px solid transparent;border-bottom:3.5px solid transparent;border-right:4px solid #999"></div>
<div class="a" style="left:164px;top:537px;width:0;height:0;border-top:3.5px solid transparent;border-bottom:3.5px solid transparent;border-right:4px solid #999"></div>
<div class="a" style="left:175px;top:535px;width:46px;height:12px;background:linear-gradient(#eee,#ccc);border:1px solid #888"></div>
<div class="a" style="left:175px;top:535px;width:34px;height:12px;background:#fff;border:1px solid #888"></div>
<div class="t" style="left:178px;top:538px;font-size:10px;color:#333">1</div>
<div class="tri" style="left:211px;top:539px;border-left-width:3.5px;border-right-width:3.5px;border-top-width:5px"></div>
<div class="a" style="left:230px;top:537px;width:0;height:0;border-top:3.5px solid transparent;border-bottom:3.5px solid transparent;border-left:4px solid #999"></div>
<div class="a" style="left:242px;top:537px;width:0;height:0;border-top:3.5px solid transparent;border-bottom:3.5px solid transparent;border-left:4px solid #999"></div>
<div class="a" style="left:247px;top:537px;width:1px;height:7px;background:#999"></div>
<div class="a" style="left:225px;top:535px;width:1px;height:12px;background:#aaa"></div>
<div class="t" style="left:327px;top:537px;font-size:9.5px;color:#333">文字</div>
<div class="a" style="left:414px;top:535px;width:15px;height:12px;background:#c8c8c8;border-left:1px solid #aaa"></div>
<div class="a" style="left:420px;top:537px;width:0;height:0;border-top:3.5px solid transparent;border-bottom:3.5px solid transparent;border-left:4px solid #222"></div>
<div class="a" style="left:429px;top:535px;width:358px;height:12px;background:#8e8e8e"></div>
<div class="a" style="left:435px;top:537px;width:0;height:0;border-top:3.5px solid transparent;border-bottom:3.5px solid transparent;border-right:4px solid #111"></div>
<div class="a" style="left:602px;top:535px;width:13px;height:12px;background:#dcdcdc"></div>
<div class="a" style="left:778px;top:537px;width:0;height:0;border-top:3.5px solid transparent;border-bottom:3.5px solid transparent;border-left:4px solid #111"></div>
<div class="a" style="left:787px;top:534px;width:14px;height:13px;background:#bdbdbd"></div>
<div class="a" style="left:0;top:547px;width:1024px;height:2px;background:#161616"></div>



<!-- right panel -->
<div class="a" style="left:801px;top:70px;width:223px;height:477px;background:#c3c3c3"></div>
<div class="a" style="left:801px;top:70px;width:1px;height:477px;background:#6a6a6a"></div>
<div class="a" style="left:1023px;top:70px;width:1px;height:477px;background:#9a9a9a"></div>
<div class="a" style="left:802px;top:70px;width:221px;height:9px;background:linear-gradient(#8e8e8e,#7c7c7c);border-bottom:1px solid #5c5c5c"></div>
<div class="a" style="left:1012px;top:72px;width:0;height:0;border-top:2.5px solid transparent;border-bottom:2.5px solid transparent;border-left:3px solid #3a3a3a"></div>
<div class="a" style="left:1016px;top:72px;width:0;height:0;border-top:2.5px solid transparent;border-bottom:2.5px solid transparent;border-left:3px solid #3a3a3a"></div>
<div class="a" style="left:802px;top:79px;width:220px;height:15px;background:#8f8f8f"></div>
<div class="a" style="left:802px;top:79px;width:34px;height:15px;background:#cdcdcd;border-right:1px solid #7c7c7c;overflow:hidden"><svg class="a" style="left:3px;top:3px" width="6" height="8"><path d="M0.8 3.2 L3 1 L5.2 3.2 M0.8 4.8 L3 7 L5.2 4.8" fill="none" stroke="#444" stroke-width="1.2"/></svg><div class="t" style="left:11px;top:2px;font-size:10.5px;color:#444;transform:scaleX(1);transform-origin:0 0">文字</div></div>
<div class="a" style="left:836px;top:79px;width:52px;height:15px;background:#9c9c9c;border-right:1px solid #7c7c7c;overflow:hidden"><div class="t" style="left:3px;top:2px;font-size:10.5px;color:#444;transform:scaleX(0.76);transform-origin:0 0"></div></div>
<div class="tri" style="left:1007px;top:85px;border-left-width:2px;border-right-width:2px;border-top-width:3px;border-top-color:#333"></div><div class="a" style="left:1011px;top:82px;width:8px;height:8px;background:repeating-linear-gradient(#666 0 1px,transparent 1px 2.4px)"></div>
<div class="t" style="left:842px;top:82px;font-size:10px;color:#555;transform:scaleX(0.86);transform-origin:0 0">OpenType</div>
<div class="btn" style="left:807px;top:99px;width:109px;height:20px;background:linear-gradient(#f0f0f0,#d8d8d8);border-color:#8c8c8c"></div>
<svg class="a" style="left:812px;top:102px" width="15" height="15" viewBox="0 0 15 15"><rect x="2.5" y="2.5" width="10" height="10" fill="none" stroke="#222" stroke-width="1"/><g fill="#222"><circle cx="2.5" cy="2.5" r="1.6"/><circle cx="12.5" cy="2.5" r="1.6"/><circle cx="2.5" cy="12.5" r="1.6"/><circle cx="12.5" cy="12.5" r="1.6"/></g><path d="M5.5 5.5 H9.5 M7.5 5.5 V10 M6.5 10 H8.5" stroke="#222" stroke-width="0.9" fill="none"/></svg>
<div class="t" style="left:832px;top:103px;font-size:11px;color:#3a3a3a;transform:scaleX(0.94);transform-origin:0 0">文字タッチツール</div>

<div class="btn" style="left:807px;top:124px;width:190px;height:16px"></div>
<div class="inp" style="left:807px;top:124px;width:175px;height:16px;border-color:#8a8a8a"></div>
<svg class="a" style="left:809px;top:126px" width="16" height="12"><circle cx="7" cy="5" r="3.5" fill="none" stroke="#222" stroke-width="1.2"/><path d="M4.6 7.4 L1.5 10.5" stroke="#222" stroke-width="1.4"/><path d="M11 8 L14 8 L12.5 10Z" fill="#222"/></svg>
<div class="t" style="left:826px;top:127px;font-size:11px;color:#333">小塚ゴシック Pr6N</div>
<div class="tri" style="left:985px;top:130px;border-left-width:3.5px;border-right-width:3.5px;border-top-width:5px"></div>

<div class="btn" style="left:807px;top:145px;width:189px;height:16px"></div>
<div class="inp" style="left:807px;top:145px;width:174px;height:16px;border-color:#8a8a8a"></div>
<div class="t" style="left:810px;top:148px;font-size:11px;color:#333">R</div>
<div class="tri" style="left:984px;top:151px;border-left-width:3.5px;border-right-width:3.5px;border-top-width:5px"></div>
<div class="a" style="left:806px;top:165px;width:190px;height:1px;background:#b4b4b4"></div><div class="a" style="left:806px;top:166px;width:190px;height:1px;background:#cfcfcf"></div>
<div class="btn" style="left:824px;top:171px;width:68px;height:15px"></div>
<div class="a" style="left:825px;top:178px;width:13px;height:1px;background:#9a9a9a"></div><div class="tri" style="left:828px;top:173px;border-top:0;border-bottom:4px solid #111;border-left-width:3px;border-right-width:3px"></div><div class="tri" style="left:828px;top:180px;border-left-width:3px;border-right-width:3px;border-top-width:4px"></div>
<div class="inp" style="left:838px;top:171px;width:42px;height:15px;border-color:#8a8a8a"></div><div class="t" style="left:841px;top:174px;font-size:11px;color:#444">16.93 Ç</div><div class="tri" style="left:883px;top:176px;border-left-width:3.5px;border-right-width:3.5px;border-top-width:5px"></div>
<div class="btn" style="left:928px;top:171px;width:68px;height:15px"></div>
<div class="a" style="left:929px;top:178px;width:13px;height:1px;background:#9a9a9a"></div><div class="tri" style="left:932px;top:173px;border-top:0;border-bottom:4px solid #111;border-left-width:3px;border-right-width:3px"></div><div class="tri" style="left:932px;top:180px;border-left-width:3px;border-right-width:3px;border-top-width:4px"></div>
<div class="inp" style="left:942px;top:171px;width:42px;height:15px;border-color:#8a8a8a"></div><div class="t" style="left:945px;top:174px;font-size:11px;color:#444">(29.63 I</div><div class="tri" style="left:987px;top:176px;border-left-width:3.5px;border-right-width:3.5px;border-top-width:5px"></div>
<div class="btn" style="left:824px;top:192px;width:68px;height:15px"></div>
<div class="a" style="left:825px;top:199px;width:13px;height:1px;background:#9a9a9a"></div><div class="tri" style="left:828px;top:194px;border-top:0;border-bottom:4px solid #111;border-left-width:3px;border-right-width:3px"></div><div class="tri" style="left:828px;top:201px;border-left-width:3px;border-right-width:3px;border-top-width:4px"></div>
<div class="inp" style="left:838px;top:192px;width:42px;height:15px;border-color:#8a8a8a"></div><div class="t" style="left:841px;top:195px;font-size:11px;color:#444">100%</div><div class="tri" style="left:883px;top:197px;border-left-width:3.5px;border-right-width:3.5px;border-top-width:5px"></div>
<div class="btn" style="left:928px;top:192px;width:68px;height:15px"></div>
<div class="a" style="left:929px;top:199px;width:13px;height:1px;background:#9a9a9a"></div><div class="tri" style="left:932px;top:194px;border-top:0;border-bottom:4px solid #111;border-left-width:3px;border-right-width:3px"></div><div class="tri" style="left:932px;top:201px;border-left-width:3px;border-right-width:3px;border-top-width:4px"></div>
<div class="inp" style="left:942px;top:192px;width:42px;height:15px;border-color:#8a8a8a"></div><div class="t" style="left:945px;top:195px;font-size:11px;color:#444">100%</div><div class="tri" style="left:987px;top:197px;border-left-width:3.5px;border-right-width:3.5px;border-top-width:5px"></div>
<div class="btn" style="left:824px;top:213px;width:68px;height:15px"></div>
<div class="a" style="left:825px;top:220px;width:13px;height:1px;background:#9a9a9a"></div><div class="tri" style="left:828px;top:215px;border-top:0;border-bottom:4px solid #111;border-left-width:3px;border-right-width:3px"></div><div class="tri" style="left:828px;top:222px;border-left-width:3px;border-right-width:3px;border-top-width:4px"></div>
<div class="inp" style="left:838px;top:213px;width:42px;height:15px;border-color:#8a8a8a"></div><div class="t" style="left:841px;top:216px;font-size:11px;color:#444">0</div><div class="tri" style="left:883px;top:218px;border-left-width:3.5px;border-right-width:3.5px;border-top-width:5px"></div>
<div class="btn" style="left:928px;top:213px;width:68px;height:15px"></div>
<div class="a" style="left:929px;top:220px;width:13px;height:1px;background:#9a9a9a"></div><div class="tri" style="left:932px;top:215px;border-top:0;border-bottom:4px solid #111;border-left-width:3px;border-right-width:3px"></div><div class="tri" style="left:932px;top:222px;border-left-width:3px;border-right-width:3px;border-top-width:4px"></div>
<div class="inp" style="left:942px;top:213px;width:42px;height:15px;border-color:#8a8a8a"></div><div class="t" style="left:945px;top:216px;font-size:11px;color:#444">0</div><div class="tri" style="left:987px;top:218px;border-left-width:3.5px;border-right-width:3.5px;border-top-width:5px"></div>
<div class="a" style="left:806px;top:233px;width:190px;height:1px;background:#b4b4b4"></div><div class="a" style="left:806px;top:234px;width:190px;height:1px;background:#cfcfcf"></div>
<div class="btn" style="left:824px;top:240px;width:68px;height:15px"></div>
<div class="a" style="left:825px;top:247px;width:13px;height:1px;background:#9a9a9a"></div><div class="tri" style="left:828px;top:242px;border-top:0;border-bottom:4px solid #111;border-left-width:3px;border-right-width:3px"></div><div class="tri" style="left:828px;top:249px;border-left-width:3px;border-right-width:3px;border-top-width:4px"></div>
<div class="inp" style="left:838px;top:240px;width:42px;height:15px;border-color:#8a8a8a"></div><div class="t" style="left:841px;top:243px;font-size:11px;color:#444">0%</div><div class="tri" style="left:883px;top:245px;border-left-width:3.5px;border-right-width:3.5px;border-top-width:5px"></div>
<div class="btn" style="left:824px;top:260px;width:68px;height:15px;background:linear-gradient(#f2f2f2,#d4d4d4)"></div><div class="a" style="left:876px;top:263px;width:1px;height:9px;background:#aaa"></div><div class="t" style="left:831px;top:262px;font-size:10.5px;color:#333">自動</div><div class="tri" style="left:881px;top:265px;border-left-width:3.5px;border-right-width:3.5px;border-top-width:5px;border-top-color:#111"></div>
<div class="btn" style="left:928px;top:260px;width:68px;height:15px;background:linear-gradient(#f2f2f2,#d4d4d4)"></div><div class="a" style="left:980px;top:263px;width:1px;height:9px;background:#aaa"></div><div class="t" style="left:935px;top:262px;font-size:10.5px;color:#333">自動</div><div class="tri" style="left:985px;top:265px;border-left-width:3.5px;border-right-width:3.5px;border-top-width:5px;border-top-color:#111"></div>
<div class="a" style="left:806px;top:281px;width:190px;height:1px;background:#b4b4b4"></div><div class="a" style="left:806px;top:282px;width:190px;height:1px;background:#cfcfcf"></div>
<div class="btn" style="left:824px;top:287px;width:68px;height:15px"></div>
<div class="a" style="left:825px;top:294px;width:13px;height:1px;background:#9a9a9a"></div><div class="tri" style="left:828px;top:289px;border-top:0;border-bottom:4px solid #111;border-left-width:3px;border-right-width:3px"></div><div class="tri" style="left:828px;top:296px;border-left-width:3px;border-right-width:3px;border-top-width:4px"></div>
<div class="inp" style="left:838px;top:287px;width:42px;height:15px;border-color:#8a8a8a"></div><div class="t" style="left:841px;top:290px;font-size:11px;color:#444">0 H</div><div class="tri" style="left:883px;top:292px;border-left-width:3.5px;border-right-width:3.5px;border-top-width:5px"></div>
<div class="btn" style="left:928px;top:287px;width:68px;height:15px"></div>
<div class="a" style="left:929px;top:294px;width:13px;height:1px;background:#9a9a9a"></div><div class="tri" style="left:932px;top:289px;border-top:0;border-bottom:4px solid #111;border-left-width:3px;border-right-width:3px"></div><div class="tri" style="left:932px;top:296px;border-left-width:3px;border-right-width:3px;border-top-width:4px"></div>
<div class="inp" style="left:942px;top:287px;width:42px;height:15px;border-color:#8a8a8a"></div><div class="t" style="left:945px;top:290px;font-size:11px;color:#444">0°</div><div class="tri" style="left:987px;top:292px;border-left-width:3.5px;border-right-width:3.5px;border-top-width:5px"></div>
<div class="a" style="left:806px;top:307px;width:190px;height:1px;background:#b4b4b4"></div><div class="a" style="left:806px;top:308px;width:190px;height:1px;background:#cfcfcf"></div>
<div class="t" style="left:809px;top:312px;font-family:'Liberation Serif',serif;font-weight:bold;color:#333;font-size:12px;letter-spacing:-0.5px">TT</div>
<div class="t" style="left:834px;top:312px;font-family:'Liberation Serif',serif;font-weight:bold;color:#333;font-size:12px">T<span style="font-size:9px">T</span></div>
<div class="t" style="left:884px;top:312px;font-family:'Liberation Serif',serif;font-weight:bold;color:#333;font-size:12px">T<span style="font-size:6px;vertical-align:5px">1</span></div>
<div class="t" style="left:909px;top:312px;font-family:'Liberation Serif',serif;font-weight:bold;color:#333;font-size:12px">T<span style="font-size:6px;vertical-align:-1px">1</span></div>
<div class="t" style="left:958px;top:312px;font-family:'Liberation Serif',serif;font-weight:bold;color:#333;font-size:12px;text-decoration:underline">T</div>
<div class="t" style="left:983px;top:312px;font-family:'Liberation Serif',serif;font-weight:bold;color:#333;font-size:12px;text-decoration:line-through">T</div>
<div class="a" style="left:806px;top:327px;width:190px;height:1px;background:#b4b4b4"></div><div class="a" style="left:806px;top:328px;width:190px;height:1px;background:#cfcfcf"></div>
<div class="btn" style="left:807px;top:334px;width:85px;height:15px;background:linear-gradient(#f2f2f2,#d4d4d4)"></div><div class="a" style="left:876px;top:337px;width:1px;height:9px;background:#aaa"></div><div class="t" style="left:814px;top:336px;font-size:10.5px;color:#333">英語：米国</div><div class="tri" style="left:881px;top:339px;border-left-width:3.5px;border-right-width:3.5px;border-top-width:5px;border-top-color:#111"></div>
<div class="a" style="left:928px;top:334px;width:68px;height:15px;background:#cdcdcd;border:1px solid #aaa"></div><div class="t" style="left:934px;top:336px;font-size:10.5px;color:#a8a8a8">シャープ</div><div class="a" style="left:980px;top:337px;width:1px;height:9px;background:#aaa"></div><div class="tri" style="left:985px;top:339px;border-left-width:3px;border-right-width:3px;border-top-width:4px;border-top-color:#aaa"></div><div class="t" style="left:910px;top:334px;font-size:8px;color:#333">a<span style="font-size:11px">a</span></div>

<svg class="a" style="left:806px;top:170px" width="18" height="60" viewBox="0 0 18 60">
<text x="0" y="16" font-size="13" fill="#333" font-family="Liberation Serif" font-weight="bold">T</text>
<text x="5" y="16" font-size="16" fill="#333" font-family="Liberation Serif">T</text>
<text x="4" y="37" font-size="16" fill="#333" font-family="Liberation Serif">T</text>
<path d="M2.5 26 V37 M1 28 L2.5 26 L4 28 M1 35 L2.5 37 L4 35" stroke="#333" stroke-width="1" fill="none"/>
<path d="M1 43 L4 52 L7 43 M5 52 L8.5 43 L12 52 M6.5 49 H10.5 M3 56 H12 M3 56 L5 54.5" stroke="#333" stroke-width="1.1" fill="none"/>
</svg>
<svg class="a" style="left:908px;top:170px" width="18" height="60" viewBox="0 0 18 60">
<text x="5" y="8" font-size="8" fill="#333" font-family="Liberation Serif">A</text>
<text x="5" y="17" font-size="8" fill="#333" font-family="Liberation Serif">A</text>
<path d="M3 8 V17 M1.8 10 L3 8 L4.2 10 M1.8 15 L3 17 L4.2 15" stroke="#333" stroke-width="1" fill="none"/>
<text x="3" y="33" font-size="15" fill="#333" font-family="Liberation Serif" font-weight="bold">T</text>
<path d="M1 36 H16 M1 36 L3 34.5 M16 36 L14 34.5" stroke="#333" stroke-width="1" fill="none"/>
<rect x="2" y="43" width="14" height="8" fill="#444"/>
<text x="3" y="50" font-size="7" fill="#ddd" font-family="Liberation Sans" font-weight="bold">VA</text>
<path d="M2 55 H16 M2 55 L4 53.5 M16 55 L14 53.5" stroke="#333" stroke-width="1" fill="none"/>
</svg>
<svg class="a" style="left:806px;top:238px" width="18" height="68" viewBox="0 0 18 68">
<g fill="none" stroke="#444" stroke-width="0.8">
<path d="M3.5 2 V11 M13.5 2 V11"/>
<path d="M1 14 H6 M16 14 H11 M1 14 L3 12.5 M16 14 L14 12.5"/>
<path d="M5.5 22 V31 M15.5 22 V31"/>
<path d="M1 34 H7 L5 32.5"/>
</g>
<text x="5" y="10" font-size="8" fill="#333" font-family="Liberation Sans">あ</text>
<text x="7" y="30" font-size="8" fill="#333" font-family="Liberation Sans">あ</text>
<text x="1" y="59" font-size="10" fill="#333" font-family="Liberation Sans">A</text>
<text x="9" y="54" font-size="6" fill="#333" font-family="Liberation Sans">a</text>
<path d="M1 61.5 H9 M11 58 V63 M10 61 L11 63 L12 61" stroke="#333" stroke-width="0.8" fill="none"/>
</svg>
<svg class="a" style="left:911px;top:258px" width="18" height="50" viewBox="0 0 18 50">
<g fill="none" stroke="#444" stroke-width="0.8">
<path d="M1.5 2 V11 M11.5 2 V11"/>
<path d="M16 14 H9 L11 12.5"/>
</g>
<text x="3" y="10" font-size="8" fill="#333" font-family="Liberation Sans">あ</text>
<circle cx="8" cy="37" r="6.5" fill="none" stroke="#333" stroke-width="1"/>
<text x="4.5" y="41.5" font-size="9" fill="#333" font-family="Liberation Serif" font-weight="bold">T</text>
<path d="M6 30.5 L8 29 L10 30.5" stroke="#333" stroke-width="1" fill="none"/>
</svg>

<div class="a" style="left:802px;top:353px;width:220px;height:4px;background:#5e5e5e"></div>
<div class="a" style="left:802px;top:357px;width:220px;height:14px;background:#8f8f8f"></div>
<div class="a" style="left:802px;top:357px;width:41px;height:14px;background:#9c9c9c;border-right:1px solid #7c7c7c;overflow:hidden"><div class="t" style="left:3px;top:2px;font-size:10.5px;color:#444;transform:scaleX(0.76);transform-origin:0 0">レイヤー</div></div>
<div class="a" style="left:843px;top:357px;width:57px;height:14px;background:#9c9c9c;border-right:1px solid #7c7c7c;overflow:hidden"><div class="t" style="left:3px;top:2px;font-size:10.5px;color:#444;transform:scaleX(0.76);transform-origin:0 0">アートボード</div></div>
<div class="a" style="left:900px;top:357px;width:43px;height:14px;background:#cdcdcd;border-right:1px solid #7c7c7c;overflow:hidden"><div class="t" style="left:3px;top:2px;font-size:10.5px;color:#444;transform:scaleX(0.76);transform-origin:0 0">アクション</div></div>
<div class="a" style="left:943px;top:357px;width:31px;height:14px;background:#9c9c9c;border-right:1px solid #7c7c7c;overflow:hidden"><div class="t" style="left:3px;top:2px;font-size:10.5px;color:#444;transform:scaleX(0.76);transform-origin:0 0">リンク</div></div>
<div class="tri" style="left:1007px;top:363px;border-left-width:2px;border-right-width:2px;border-top-width:3px;border-top-color:#333"></div><div class="a" style="left:1011px;top:360px;width:8px;height:8px;background:repeating-linear-gradient(#666 0 1px,transparent 1px 2.4px)"></div>
<div class="a" style="left:802px;top:371px;width:220px;height:1px;background:#6c6c6c"></div>
<div class="a" style="left:802px;top:372px;width:220px;height:14px;background:#8f8f8f"></div>
<div class="a" style="left:802px;top:372px;width:34px;height:14px;background:#cdcdcd;border-right:1px solid #7c7c7c;overflow:hidden"><svg class="a" style="left:3px;top:3px" width="6" height="8"><path d="M0.8 3.2 L3 1 L5.2 3.2 M0.8 4.8 L3 7 L5.2 4.8" fill="none" stroke="#444" stroke-width="1.2"/></svg><div class="t" style="left:11px;top:2px;font-size:10.5px;color:#444;transform:scaleX(1);transform-origin:0 0">変形</div></div>
<div class="a" style="left:836px;top:372px;width:30px;height:14px;background:#9c9c9c;border-right:1px solid #7c7c7c;overflow:hidden"><div class="t" style="left:3px;top:2px;font-size:10.5px;color:#444;transform:scaleX(1);transform-origin:0 0">整列</div></div>
<div class="a" style="left:866px;top:372px;width:69px;height:14px;background:#9c9c9c;border-right:1px solid #7c7c7c;overflow:hidden"><div class="t" style="left:3px;top:2px;font-size:10.5px;color:#444;transform:scaleX(0.76);transform-origin:0 0">パスファインダー</div></div>
<div class="tri" style="left:1007px;top:378px;border-left-width:2px;border-right-width:2px;border-top-width:3px;border-top-color:#333"></div><div class="a" style="left:1011px;top:375px;width:8px;height:8px;background:repeating-linear-gradient(#666 0 1px,transparent 1px 2.4px)"></div>
<div class="a" style="left:802px;top:386px;width:220px;height:4px;background:#6c6c6c"></div>
<div class="a" style="left:802px;top:390px;width:220px;height:14px;background:#8f8f8f"></div>
<div class="a" style="left:802px;top:390px;width:34px;height:14px;background:#cdcdcd;border-right:1px solid #7c7c7c;overflow:hidden"><svg class="a" style="left:3px;top:3px" width="6" height="8"><path d="M0.8 3.2 L3 1 L5.2 3.2 M0.8 4.8 L3 7 L5.2 4.8" fill="none" stroke="#444" stroke-width="1.2"/></svg><div class="t" style="left:11px;top:2px;font-size:10.5px;color:#444;transform:scaleX(1);transform-origin:0 0">線</div></div>
<div class="a" style="left:836px;top:390px;width:44px;height:14px;background:#9c9c9c;border-right:1px solid #7c7c7c;overflow:hidden"><div class="t" style="left:3px;top:2px;font-size:10.5px;color:#444;transform:scaleX(0.76);transform-origin:0 0">グラデーション</div></div>
<div class="a" style="left:880px;top:390px;width:24px;height:14px;background:#9c9c9c;border-right:1px solid #7c7c7c;overflow:hidden"><div class="t" style="left:3px;top:2px;font-size:10.5px;color:#444;transform:scaleX(1);transform-origin:0 0">透明</div></div>
<div class="a" style="left:904px;top:390px;width:45px;height:14px;background:#9c9c9c;border-right:1px solid #7c7c7c;overflow:hidden"><div class="t" style="left:3px;top:2px;font-size:10.5px;color:#444;transform:scaleX(0.76);transform-origin:0 0">アピアランス</div></div>
<div class="a" style="left:949px;top:390px;width:44px;height:14px;background:#9c9c9c;border-right:1px solid #7c7c7c;overflow:hidden"><div class="t" style="left:3px;top:2px;font-size:10.5px;color:#444;transform:scaleX(0.76);transform-origin:0 0">グラフィックスタイル</div></div>
<div class="tri" style="left:1007px;top:396px;border-left-width:2px;border-right-width:2px;border-top-width:3px;border-top-color:#333"></div><div class="a" style="left:1011px;top:393px;width:8px;height:8px;background:repeating-linear-gradient(#666 0 1px,transparent 1px 2.4px)"></div>
<div class="a" style="left:802px;top:404px;width:220px;height:3px;background:#6c6c6c"></div>
<div class="a" style="left:802px;top:407px;width:220px;height:14px;background:#8f8f8f"></div>
<div class="a" style="left:802px;top:407px;width:33px;height:14px;background:#9c9c9c;border-right:1px solid #7c7c7c;overflow:hidden"><div class="t" style="left:3px;top:2px;font-size:10.5px;color:#444;transform:scaleX(0.76);transform-origin:0 0">カラー</div></div>
<div class="a" style="left:835px;top:407px;width:44px;height:14px;background:#cdcdcd;border-right:1px solid #7c7c7c;overflow:hidden"><div class="t" style="left:3px;top:2px;font-size:10.5px;color:#444;transform:scaleX(0.76);transform-origin:0 0">スウォッチ</div></div>
<div class="a" style="left:879px;top:407px;width:31px;height:14px;background:#9c9c9c;border-right:1px solid #7c7c7c;overflow:hidden"><div class="t" style="left:3px;top:2px;font-size:10.5px;color:#444;transform:scaleX(0.76);transform-origin:0 0">ブラシ</div></div>
<div class="a" style="left:910px;top:407px;width:43px;height:14px;background:#9c9c9c;border-right:1px solid #7c7c7c;overflow:hidden"><div class="t" style="left:3px;top:2px;font-size:10.5px;color:#444;transform:scaleX(0.76);transform-origin:0 0">シンボル</div></div>
<div class="tri" style="left:1007px;top:413px;border-left-width:2px;border-right-width:2px;border-top-width:3px;border-top-color:#333"></div><div class="a" style="left:1011px;top:410px;width:8px;height:8px;background:repeating-linear-gradient(#666 0 1px,transparent 1px 2.4px)"></div>

<!-- swatches body -->
<div class="a" style="left:802px;top:421px;width:220px;height:126px;background:#c3c3c3"></div>
<div class="a" style="left:814px;top:434px;width:16px;height:15px;background:#fff;border:1px solid #999"></div>
<svg class="a" style="left:814px;top:434px" width="16" height="15"><rect x="4" y="4" width="7" height="6" fill="#ccc"/><path d="M1 14 L15 1" stroke="#c33" stroke-width="1.3"/></svg>
<div class="a" style="left:807px;top:426px;width:15px;height:15px;background:#000;border:1px solid #999"></div>
<div class="a" style="left:978px;top:425px;width:41px;height:19px;background:#e6e6e6;border:1px solid #999"></div>
<div class="a" style="left:998px;top:426px;width:20px;height:17px;background:#9a9a9a"></div>
<div class="a" style="left:982px;top:429px;width:12px;height:11px;background:repeating-linear-gradient(#222 0 1.5px,transparent 1.5px 3.2px)"></div>
<svg class="a" style="left:1002px;top:428px" width="13" height="13"><g fill="#222"><rect x="0" y="0" width="3" height="3"/><rect x="4.5" y="0" width="3" height="3"/><rect x="9" y="0" width="3" height="3"/><rect x="0" y="4.5" width="3" height="3"/><rect x="4.5" y="4.5" width="3" height="3"/><rect x="9" y="4.5" width="3" height="3"/><rect x="0" y="9" width="3" height="3"/><rect x="4.5" y="9" width="3" height="3"/><rect x="9" y="9" width="3" height="3"/></g></svg>
<div class="a" style="left:806px;top:453px;width:214px;height:79px;background:#c0c0c0;border:1px solid #8a8a8a"></div>
<div class="a" style="left:1009px;top:454px;width:10px;height:77px;background:#a4a4a4;border-left:1px solid #999"></div>
<svg class="a" style="left:1009px;top:455px" width="10" height="76"><path d="M2 7 L5 4 L8 7 M2 69 L5 72 L8 69" fill="none" stroke="#c4c4c4" stroke-width="1"/></svg>
<div class="a" style="left:806px;top:453px;width:203px;height:23px;background:#cfcfcf"></div><div class="a" style="left:806px;top:476px;width:135px;height:11px;background:#cfcfcf"></div><div class="a" style="left:806px;top:488px;width:135px;height:12px;background:#cfcfcf"></div><div class="a" style="left:806px;top:500px;width:79px;height:12px;background:#cfcfcf"></div>
<svg class="a" style="left:807px;top:454px" width="10" height="10"><rect width="10" height="10" fill="#fff"/><path d="M0 10 L10 0" stroke="#d22" stroke-width="1.2"/></svg><svg class="a" style="left:818px;top:454px" width="10" height="10"><rect width="10" height="10" fill="#f4f4f4"/><circle cx="5" cy="5" r="3" fill="none" stroke="#222" stroke-width="0.9"/><path d="M5 0.5 V9.5 M0.5 5 H9.5" stroke="#222" stroke-width="0.9"/></svg><div class="a" style="left:829px;top:454px;width:10px;height:10px;background:#ffffff"></div><div class="a" style="left:841px;top:454px;width:10px;height:10px;background:#000000"></div><div class="a" style="left:852px;top:454px;width:10px;height:10px;background:#e8141b"></div><div class="a" style="left:863px;top:454px;width:10px;height:10px;background:#ffe600"></div><div class="a" style="left:874px;top:454px;width:10px;height:10px;background:#009a44"></div><div class="a" style="left:885px;top:454px;width:10px;height:10px;background:#00a0e4"></div><div class="a" style="left:896px;top:454px;width:10px;height:10px;background:#1d2088"></div><div class="a" style="left:908px;top:454px;width:10px;height:10px;background:#e4007f"></div><div class="a" style="left:919px;top:454px;width:10px;height:10px;background:#d7000f"></div><div class="a" style="left:930px;top:454px;width:10px;height:10px;background:#e9382f"></div><div class="a" style="left:941px;top:454px;width:10px;height:10px;background:#ec6c1f"></div><div class="a" style="left:952px;top:454px;width:10px;height:10px;background:#f39800"></div><div class="a" style="left:964px;top:454px;width:10px;height:10px;background:#f8b62d"></div><div class="a" style="left:975px;top:454px;width:10px;height:10px;background:#fff100"></div><div class="a" style="left:986px;top:454px;width:10px;height:10px;background:#e5e000"></div><div class="a" style="left:997px;top:454px;width:10px;height:10px;background:#8fc31f"></div>
<div class="a" style="left:807px;top:465px;width:10px;height:10px;background:#13a538"></div><div class="a" style="left:818px;top:465px;width:10px;height:10px;background:#0e9a3d"></div><div class="a" style="left:829px;top:465px;width:10px;height:10px;background:#006837"></div><div class="a" style="left:841px;top:465px;width:10px;height:10px;background:#14a56b"></div><div class="a" style="left:852px;top:465px;width:10px;height:10px;background:#00a29a"></div><div class="a" style="left:863px;top:465px;width:10px;height:10px;background:#29abe2"></div><div class="a" style="left:874px;top:465px;width:10px;height:10px;background:#0f75bd"></div><div class="a" style="left:885px;top:465px;width:10px;height:10px;background:#1d3b8f"></div><div class="a" style="left:896px;top:465px;width:10px;height:10px;background:#1a2368"></div><div class="a" style="left:908px;top:465px;width:10px;height:10px;background:#5f2886"></div><div class="a" style="left:919px;top:465px;width:10px;height:10px;background:#920783"></div><div class="a" style="left:930px;top:465px;width:10px;height:10px;background:#a4056a"></div><div class="a" style="left:941px;top:465px;width:10px;height:10px;background:#d6005f"></div><div class="a" style="left:952px;top:465px;width:10px;height:10px;background:#e4007f"></div><div class="a" style="left:964px;top:465px;width:10px;height:10px;background:#d3c39a"></div><div class="a" style="left:975px;top:465px;width:10px;height:10px;background:#a88f7a"></div><div class="a" style="left:986px;top:465px;width:10px;height:10px;background:#8a7052"></div><div class="a" style="left:997px;top:465px;width:10px;height:10px;background:#6b513f"></div>
<div class="a" style="left:807px;top:476px;width:10px;height:10px;background:#d4a96a"></div><div class="a" style="left:818px;top:476px;width:10px;height:10px;background:#c38a4b"></div><div class="a" style="left:829px;top:476px;width:10px;height:10px;background:#a4683a"></div><div class="a" style="left:841px;top:476px;width:10px;height:10px;background:#8b5224"></div><div class="a" style="left:852px;top:476px;width:10px;height:10px;background:#6b3a14"></div><div class="a" style="left:863px;top:476px;width:10px;height:10px;background:#4a2910"></div><div class="a" style="left:874px;top:476px;width:10px;height:10px;background:linear-gradient(90deg,#fff 20%,#000)"></div><div class="a" style="left:885px;top:476px;width:10px;height:10px;background:linear-gradient(90deg,#ffe600,#ec6c1f)"></div><div class="a" style="left:896px;top:476px;width:10px;height:10px;background:linear-gradient(90deg,#4a90d9,#e8f0ff)"></div><div class="a" style="left:908px;top:476px;width:10px;height:10px;background:radial-gradient(circle,#eee 0 3px,#000 3.6px)"></div><div class="a" style="left:919px;top:476px;width:10px;height:10px;background:radial-gradient(circle,#6ab52a 0 2.5px,#f0f8e0 3px,#f0f8e0 4px,#7ac040 4.5px)"></div><div class="a" style="left:930px;top:476px;width:10px;height:10px;background:radial-gradient(circle at 30% 30%,#e0c8a0 0 1.5px,transparent 2px),radial-gradient(circle at 70% 70%,#e0c8a0 0 1.5px,transparent 2px),#a88058"></div>
<svg class="a" style="left:807px;top:489px" width="10" height="10"><rect width="10" height="10" fill="#d0d0d0"/><path d="M1 2.5 H4 L5 3.5 H9 V8.5 H1Z" fill="#b8b8b8" stroke="#333" stroke-width="0.8"/></svg><div class="a" style="left:818px;top:489px;width:10px;height:10px;background:#000000"></div><div class="a" style="left:829px;top:489px;width:10px;height:10px;background:#3c3c3c"></div><div class="a" style="left:841px;top:489px;width:10px;height:10px;background:#5a5a5a"></div><div class="a" style="left:852px;top:489px;width:10px;height:10px;background:#747474"></div><div class="a" style="left:863px;top:489px;width:10px;height:10px;background:#8c8c8c"></div><div class="a" style="left:874px;top:489px;width:10px;height:10px;background:#a2a2a2"></div><div class="a" style="left:885px;top:489px;width:10px;height:10px;background:#b8b8b8"></div><div class="a" style="left:896px;top:489px;width:10px;height:10px;background:#cccccc"></div><div class="a" style="left:908px;top:489px;width:10px;height:10px;background:#dcdcdc"></div><div class="a" style="left:919px;top:489px;width:10px;height:10px;background:#eaeaea"></div><div class="a" style="left:930px;top:489px;width:10px;height:10px;background:#f6f6f6"></div>
<svg class="a" style="left:807px;top:501px" width="10" height="10"><rect width="10" height="10" fill="#d0d0d0"/><path d="M1 2.5 H4 L5 3.5 H9 V8.5 H1Z" fill="#b8b8b8" stroke="#333" stroke-width="0.8"/></svg><div class="a" style="left:818px;top:501px;width:10px;height:10px;background:#e60012"></div><div class="a" style="left:829px;top:501px;width:10px;height:10px;background:#ee7700"></div><div class="a" style="left:841px;top:501px;width:10px;height:10px;background:#ffdc00"></div><div class="a" style="left:852px;top:501px;width:10px;height:10px;background:#009944"></div><div class="a" style="left:863px;top:501px;width:10px;height:10px;background:#003f98"></div><div class="a" style="left:874px;top:501px;width:10px;height:10px;background:#7b2c8f"></div>
<svg class="a" style="left:804px;top:533px" width="220" height="14" viewBox="0 0 220 14">
<g stroke="#333" stroke-width="1" fill="#bdbdbd">
<rect x="5.5" y="3.5" width="2" height="7.5"/><rect x="8.5" y="2.5" width="2" height="8.5"/><path d="M11 3 L14.5 11"/>
<circle cx="33" cy="7" r="2.8"/>
<path d="M48 10.5 H58 Q61 10.5 60.5 8 Q60 5.5 57 6 Q56 2.5 52.5 3 Q49 3.5 49 6.5 Q46 7 47 9 Q47.5 10.5 48 10.5Z" fill="#333"/>
<rect x="104.5" y="3.5" width="8" height="8" fill="#ddd"/><path d="M107 3.5 V11.5 M109.5 3.5 V11.5 M104.5 6 H112.5 M104.5 8.5 H112.5"/>
<rect x="126.5" y="3.5" width="9" height="8" fill="#d8d8d8"/><path d="M128.5 5.5 H130.5 M128.5 8 H130.5 M132 4 V11"/>
<path d="M147.5 5.5 H151 L152 4 H156.5 V12 H147.5Z"/>
<path d="M168.5 3.5 H177.5 V11.5 H171.5 L168.5 8.5Z"/>
<path d="M189.5 5.5 H198.5 M192 5.5 V3.5 H196 V5.5 M190.5 6.5 L191.5 12.5 H196.5 L197.5 6.5Z"/>
</g>
<g fill="#222"><circle cx="36.5" cy="3.5" r="1"/><circle cx="36.5" cy="10.5" r="1"/><path d="M30 7 L32 5.5 L32 8.5Z"/><path d="M113.5 11 H117 L115.2 13Z M16 11 H19 L17.5 13Z"/></g>
<path d="M51 7.5 H56 M54 5.5 L56 7.5 L54 9.5" stroke="#eee" stroke-width="1" fill="none"/>
</svg>

</body></html>
